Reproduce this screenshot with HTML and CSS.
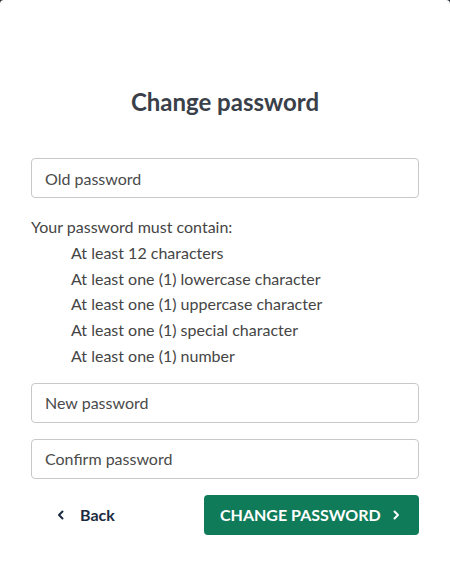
FILE: index.html
```html
<!DOCTYPE html>
<html lang="en">
<head>
<meta charset="utf-8">
<title>Change password</title>
<link rel="stylesheet" href="styles.css">
</head>
<body>
<div class="dialog">
  <h1 class="title">Change password</h1>
  <form class="form">
    <input class="field" type="password" placeholder="Old password">
    <div class="rules">
      <p class="rules-intro">Your password must contain:</p>
      <ul class="rules-list">
        <li>At least 12 characters</li>
        <li>At least one (1) lowercase character</li>
        <li>At least one (1) uppercase character</li>
        <li>At least one (1) special character</li>
        <li>At least one (1) number</li>
      </ul>
    </div>
    <div class="fields">
      <input class="field" type="password" placeholder="New password">
      <input class="field" type="password" placeholder="Confirm password">
    </div>
    <div class="actions">
      <button type="button" class="btn-back">
        <svg class="chev" width="10" height="10" viewBox="0 0 10 10"><path d="M6.5 1.5 L3 5 L6.5 8.5" fill="none" stroke="currentColor" stroke-width="2" stroke-linecap="round" stroke-linejoin="round"/></svg>
        <span>Back</span>
      </button>
      <button type="button" class="btn-primary">
        <span>CHANGE PASSWORD</span>
        <svg class="chev" width="10" height="10" viewBox="0 0 10 10"><path d="M3.5 1.5 L7 5 L3.5 8.5" fill="none" stroke="currentColor" stroke-width="2" stroke-linecap="round" stroke-linejoin="round"/></svg>
      </button>
    </div>
  </form>
</div>
</body>
</html>
```
FILE: styles.css
```css
* { box-sizing: border-box; }
html, body { margin: 0; padding: 0; }
body {
  background: #2b2f36;
  font-family: Lato, "Open Sans", sans-serif;
  color: #454545;
}
.dialog {
  background: #fff;
  width: 450px;
  height: 565px;
  border-radius: 4px 4px 0 0;
  padding: 88px 31px 0 31px;
}
.title {
  margin: 0;
  text-align: center;
  font-size: 24px;
  line-height: 28px;
  font-weight: 700;
  color: #3a4049;
}
.form {
  margin-top: 42px;
  display: flex;
  flex-direction: column;
}
.field {
  display: block;
  width: 100%;
  height: 40px;
  border: 1px solid #c8c8c8;
  border-radius: 4px;
  padding: 0 13px;
  font-family: inherit;
  font-size: 16px;
  color: #454545;
  background: #fff;
  outline: none;
}
.field::placeholder { color: #4a4a4a; opacity: 1; }
.rules {
  margin-top: 16px;
  font-size: 16px;
  line-height: 25.75px;
  color: #454545;
}
.rules-intro { margin: 0; }
.rules-list {
  margin: 0;
  padding: 0 0 0 40px;
  list-style: none;
}
.fields {
  margin-top: 14px;
  display: flex;
  flex-direction: column;
  gap: 16px;
}
.actions {
  margin-top: 16px;
  display: flex;
  justify-content: space-between;
  align-items: center;
}
.btn-back {
  display: flex;
  align-items: center;
  gap: 14px;
  height: 40px;
  padding: 0 0 0 25px;
  border: none;
  background: none;
  font-family: inherit;
  font-size: 16px;
  font-weight: 700;
  color: #1c2b3f;
  white-space: nowrap;
}
.btn-primary {
  display: flex;
  align-items: center;
  justify-content: space-between;
  height: 40px;
  width: 215px;
  padding: 0 18px 0 16px;
  border: none;
  border-radius: 4px;
  background: #0f7b58;
  color: #fff;
  font-family: inherit;
  font-size: 16px;
  font-weight: 700;
  white-space: nowrap;
}
.chev { display: block; flex: none; }
```
